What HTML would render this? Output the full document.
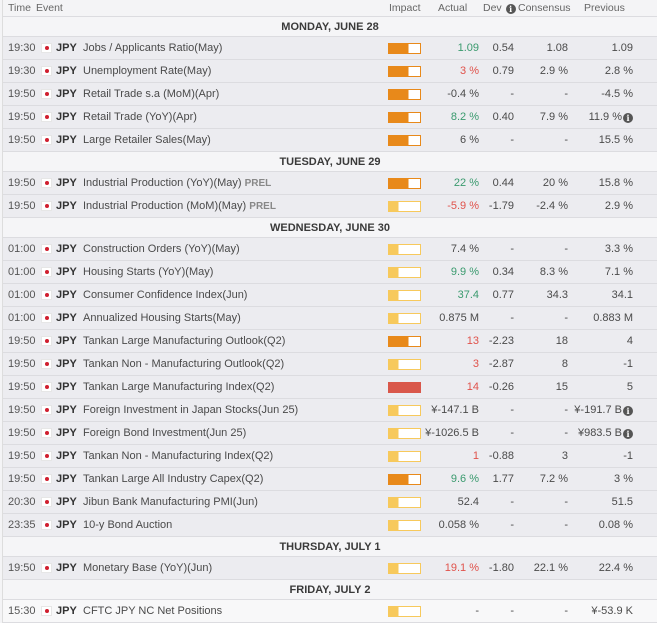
<!DOCTYPE html><html><head><style>
*{margin:0;padding:0;box-sizing:border-box}
body{width:657px;height:621px;overflow:hidden;background:#f4f4f6;font-family:"Liberation Sans",sans-serif;font-size:11px;color:#4a4a4a}
.w{position:absolute;left:2px;top:0;width:655px;border-left:1px solid #ddd}
.r{position:relative;height:23px;background:#ececf0;border-bottom:1px solid #dcdce0}
.h{height:17px;background:#f4f4f6;border-bottom:1px solid #dcdce0;color:#666;font-size:10.5px}
.d{height:20px;background:#f5f5f7;text-align:center;font-weight:bold;font-size:11px;line-height:20px;color:#3a3a3a;border-bottom:1px solid #dcdce0}
.r span{position:absolute;top:0;line-height:22px;white-space:nowrap}
.h span{line-height:17px}
.t{left:5px;color:#555}.f{left:38px;top:6px!important;width:11px;height:10px;background:#fff;border:1px solid #e6e6e6}
.f:after{content:"";position:absolute;left:3px;top:2px;width:4px;height:4px;border-radius:50%;background:#d01f2f}
.c{left:53px;font-weight:bold;color:#333}.e{left:80px}
.p{color:#888;font-weight:bold;font-size:10px}
.i{left:385px;top:6px!important;width:33px;height:11px;border:1px solid;background:#fff}
.m{border-color:#e8891a;background:linear-gradient(90deg,#e8891a 63%,#fff 63%)}
.l{border-color:#f7c95c;background:linear-gradient(90deg,#f7c95c 30%,#fff 30%)}
.hi{border-color:#d9574a;background:#d9574a}
.a{right:178px;text-align:right}.v{right:143px}.s{right:89px}.q{right:24px}
.g{color:#3a9a6e}.rd{color:#e0524b}
.n{display:inline-block;width:10px;height:10px;border-radius:50%;background:#555;color:#fff;font-size:8px;line-height:10px;text-align:center;font-weight:bold;vertical-align:-1px;margin-left:1px;font-style:normal;font-family:"DejaVu Serif",serif}
.qi{right:24px}
.last{background:#f8f8f9}
</style></head><body><div class="w">
<div class="r h"><span style="left:5px">Time</span><span style="left:33px">Event</span><span style="left:386px">Impact</span><span style="left:435px">Actual</span><span style="left:480px">Dev <b class="n">i</b></span><span style="left:515px">Consensus</span><span style="left:581px">Previous</span></div>
<div class="d">MONDAY, JUNE 28</div>
<div class="r"><span class="t">19:30</span><span class="f"></span><span class="c">JPY</span><span class="e">Jobs / Applicants Ratio(May)</span><span class="i m"></span><span class="a g">1.09</span><span class="v">0.54</span><span class="s">1.08</span><span class="q">1.09</span></div>
<div class="r"><span class="t">19:30</span><span class="f"></span><span class="c">JPY</span><span class="e">Unemployment Rate(May)</span><span class="i m"></span><span class="a rd">3 %</span><span class="v">0.79</span><span class="s">2.9 %</span><span class="q">2.8 %</span></div>
<div class="r"><span class="t">19:50</span><span class="f"></span><span class="c">JPY</span><span class="e">Retail Trade s.a (MoM)(Apr)</span><span class="i m"></span><span class="a">-0.4 %</span><span class="v">-</span><span class="s">-</span><span class="q">-4.5 %</span></div>
<div class="r"><span class="t">19:50</span><span class="f"></span><span class="c">JPY</span><span class="e">Retail Trade (YoY)(Apr)</span><span class="i m"></span><span class="a g">8.2 %</span><span class="v">0.40</span><span class="s">7.9 %</span><span class="qi">11.9 %<b class="n">i</b></span></div>
<div class="r"><span class="t">19:50</span><span class="f"></span><span class="c">JPY</span><span class="e">Large Retailer Sales(May)</span><span class="i m"></span><span class="a">6 %</span><span class="v">-</span><span class="s">-</span><span class="q">15.5 %</span></div>
<div class="d">TUESDAY, JUNE 29</div>
<div class="r"><span class="t">19:50</span><span class="f"></span><span class="c">JPY</span><span class="e">Industrial Production (YoY)(May) <b class="p">PREL</b></span><span class="i m"></span><span class="a g">22 %</span><span class="v">0.44</span><span class="s">20 %</span><span class="q">15.8 %</span></div>
<div class="r"><span class="t">19:50</span><span class="f"></span><span class="c">JPY</span><span class="e">Industrial Production (MoM)(May) <b class="p">PREL</b></span><span class="i l"></span><span class="a rd">-5.9 %</span><span class="v">-1.79</span><span class="s">-2.4 %</span><span class="q">2.9 %</span></div>
<div class="d">WEDNESDAY, JUNE 30</div>
<div class="r"><span class="t">01:00</span><span class="f"></span><span class="c">JPY</span><span class="e">Construction Orders (YoY)(May)</span><span class="i l"></span><span class="a">7.4 %</span><span class="v">-</span><span class="s">-</span><span class="q">3.3 %</span></div>
<div class="r"><span class="t">01:00</span><span class="f"></span><span class="c">JPY</span><span class="e">Housing Starts (YoY)(May)</span><span class="i l"></span><span class="a g">9.9 %</span><span class="v">0.34</span><span class="s">8.3 %</span><span class="q">7.1 %</span></div>
<div class="r"><span class="t">01:00</span><span class="f"></span><span class="c">JPY</span><span class="e">Consumer Confidence Index(Jun)</span><span class="i l"></span><span class="a g">37.4</span><span class="v">0.77</span><span class="s">34.3</span><span class="q">34.1</span></div>
<div class="r"><span class="t">01:00</span><span class="f"></span><span class="c">JPY</span><span class="e">Annualized Housing Starts(May)</span><span class="i l"></span><span class="a">0.875 M</span><span class="v">-</span><span class="s">-</span><span class="q">0.883 M</span></div>
<div class="r"><span class="t">19:50</span><span class="f"></span><span class="c">JPY</span><span class="e">Tankan Large Manufacturing Outlook(Q2)</span><span class="i m"></span><span class="a rd">13</span><span class="v">-2.23</span><span class="s">18</span><span class="q">4</span></div>
<div class="r"><span class="t">19:50</span><span class="f"></span><span class="c">JPY</span><span class="e">Tankan Non - Manufacturing Outlook(Q2)</span><span class="i l"></span><span class="a rd">3</span><span class="v">-2.87</span><span class="s">8</span><span class="q">-1</span></div>
<div class="r"><span class="t">19:50</span><span class="f"></span><span class="c">JPY</span><span class="e">Tankan Large Manufacturing Index(Q2)</span><span class="i hi"></span><span class="a rd">14</span><span class="v">-0.26</span><span class="s">15</span><span class="q">5</span></div>
<div class="r"><span class="t">19:50</span><span class="f"></span><span class="c">JPY</span><span class="e">Foreign Investment in Japan Stocks(Jun 25)</span><span class="i l"></span><span class="a">¥-147.1 B</span><span class="v">-</span><span class="s">-</span><span class="qi">¥-191.7 B<b class="n">i</b></span></div>
<div class="r"><span class="t">19:50</span><span class="f"></span><span class="c">JPY</span><span class="e">Foreign Bond Investment(Jun 25)</span><span class="i l"></span><span class="a">¥-1026.5 B</span><span class="v">-</span><span class="s">-</span><span class="qi">¥983.5 B<b class="n">i</b></span></div>
<div class="r"><span class="t">19:50</span><span class="f"></span><span class="c">JPY</span><span class="e">Tankan Non - Manufacturing Index(Q2)</span><span class="i l"></span><span class="a rd">1</span><span class="v">-0.88</span><span class="s">3</span><span class="q">-1</span></div>
<div class="r"><span class="t">19:50</span><span class="f"></span><span class="c">JPY</span><span class="e">Tankan Large All Industry Capex(Q2)</span><span class="i m"></span><span class="a g">9.6 %</span><span class="v">1.77</span><span class="s">7.2 %</span><span class="q">3 %</span></div>
<div class="r"><span class="t">20:30</span><span class="f"></span><span class="c">JPY</span><span class="e">Jibun Bank Manufacturing PMI(Jun)</span><span class="i l"></span><span class="a">52.4</span><span class="v">-</span><span class="s">-</span><span class="q">51.5</span></div>
<div class="r"><span class="t">23:35</span><span class="f"></span><span class="c">JPY</span><span class="e">10-y Bond Auction</span><span class="i l"></span><span class="a">0.058 %</span><span class="v">-</span><span class="s">-</span><span class="q">0.08 %</span></div>
<div class="d">THURSDAY, JULY 1</div>
<div class="r"><span class="t">19:50</span><span class="f"></span><span class="c">JPY</span><span class="e">Monetary Base (YoY)(Jun)</span><span class="i l"></span><span class="a rd">19.1 %</span><span class="v">-1.80</span><span class="s">22.1 %</span><span class="q">22.4 %</span></div>
<div class="d">FRIDAY, JULY 2</div>
<div class="r last"><span class="t">15:30</span><span class="f"></span><span class="c">JPY</span><span class="e">CFTC JPY NC Net Positions</span><span class="i l"></span><span class="a">-</span><span class="v">-</span><span class="s">-</span><span class="q">¥-53.9 K</span></div>
</div></body></html>
